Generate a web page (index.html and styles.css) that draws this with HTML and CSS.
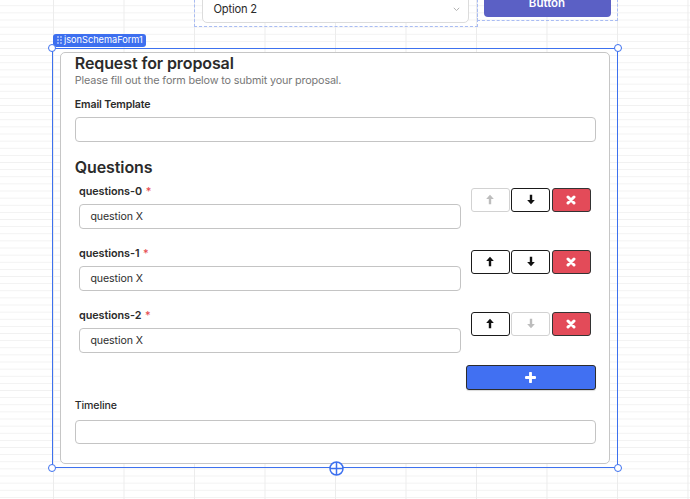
FILE: index.html
```html
<!DOCTYPE html>
<html>
<head>
<meta charset="utf-8">
<link rel="stylesheet" href="styles.css">
</head>
<body>
<div class="canvas">
  <div class="widget widget-select">
    <div class="select">
      <span class="select-text">Option 2</span>
      <svg class="chev" width="7" height="5" viewBox="0 0 7 5"><path d="M0.8 0.8 L3.5 3.6 L6.2 0.8" fill="none" stroke="#b3b3b3" stroke-width="1"/></svg>
    </div>
  </div>
  <div class="widget widget-button">
    <div class="btn-primary">Button</div>
  </div>

  <div class="tag">
    <svg class="grip" width="5" height="8" viewBox="0 0 5 8"><g fill="#fff"><circle cx="1" cy="1" r="0.8"/><circle cx="4" cy="1" r="0.8"/><circle cx="1" cy="4" r="0.8"/><circle cx="4" cy="4" r="0.8"/><circle cx="1" cy="7" r="0.8"/><circle cx="4" cy="7" r="0.8"/></g></svg>
    <span>jsonSchemaForm1</span>
  </div>

  <div class="selected">
    <div class="card">
      <h2 class="title">Request for proposal</h2>
      <p class="subtitle">Please fill out the form below to submit your proposal.</p>
      <div class="field-label">Email Template</div>
      <div class="input"></div>

      <h2 class="section">Questions</h2>
      <div class="q-list">
        <div class="q-row">
          <div class="q-main">
            <div class="q-label">questions-0 <span class="req">*</span></div>
            <div class="input q-input">question X</div>
          </div>
          <div class="q-actions">
            <div class="act disabled"><svg width="8" height="11" viewBox="0 0 10 12"><path d="M5 0 L9.8 5.4 L6.5 5.4 L6.5 12 L3.5 12 L3.5 5.4 L0.2 5.4 Z"/></svg></div>
            <div class="act"><svg width="8" height="11" viewBox="0 0 10 12"><path d="M5 12 L9.8 6.6 L6.5 6.6 L6.5 0 L3.5 0 L3.5 6.6 L0.2 6.6 Z"/></svg></div>
            <div class="act danger"><svg width="10" height="10" viewBox="0 0 10 10"><path d="M2 2 L8 8 M8 2 L2 8" stroke="#fff" stroke-width="3" stroke-linecap="round"/></svg></div>
          </div>
        </div>
        <div class="q-row">
          <div class="q-main">
            <div class="q-label">questions-1 <span class="req">*</span></div>
            <div class="input q-input">question X</div>
          </div>
          <div class="q-actions">
            <div class="act"><svg width="8" height="11" viewBox="0 0 10 12"><path d="M5 0 L9.8 5.4 L6.5 5.4 L6.5 12 L3.5 12 L3.5 5.4 L0.2 5.4 Z"/></svg></div>
            <div class="act"><svg width="8" height="11" viewBox="0 0 10 12"><path d="M5 12 L9.8 6.6 L6.5 6.6 L6.5 0 L3.5 0 L3.5 6.6 L0.2 6.6 Z"/></svg></div>
            <div class="act danger"><svg width="10" height="10" viewBox="0 0 10 10"><path d="M2 2 L8 8 M8 2 L2 8" stroke="#fff" stroke-width="3" stroke-linecap="round"/></svg></div>
          </div>
        </div>
        <div class="q-row">
          <div class="q-main">
            <div class="q-label">questions-2 <span class="req">*</span></div>
            <div class="input q-input">question X</div>
          </div>
          <div class="q-actions">
            <div class="act"><svg width="8" height="11" viewBox="0 0 10 12"><path d="M5 0 L9.8 5.4 L6.5 5.4 L6.5 12 L3.5 12 L3.5 5.4 L0.2 5.4 Z"/></svg></div>
            <div class="act disabled"><svg width="8" height="11" viewBox="0 0 10 12"><path d="M5 12 L9.8 6.6 L6.5 6.6 L6.5 0 L3.5 0 L3.5 6.6 L0.2 6.6 Z"/></svg></div>
            <div class="act danger"><svg width="10" height="10" viewBox="0 0 10 10"><path d="M2 2 L8 8 M8 2 L2 8" stroke="#fff" stroke-width="3" stroke-linecap="round"/></svg></div>
          </div>
        </div>
      </div>

      <div class="add-wrap">
        <div class="add"><svg width="11" height="11" viewBox="0 0 10 10"><path d="M5 1 V9 M1 5 H9" stroke="#fff" stroke-width="2.6" stroke-linecap="round"/></svg></div>
      </div>

      <div class="field-label light">Timeline</div>
      <div class="input input-last"></div>
    </div>

    <span class="handle h-tl"></span>
    <span class="handle h-tr"></span>
    <span class="handle h-bl"></span>
    <span class="handle h-br"></span>
    <svg class="plus-handle" width="15" height="15" viewBox="0 0 15 15"><circle cx="7.5" cy="7.5" r="6.5" fill="#fff" stroke="#3d71ef" stroke-width="1.5"/><path d="M7.5 1 V14 M1 7.5 H14" stroke="#3d71ef" stroke-width="1.5"/></svg>
  </div>
</div>
</body>
</html>
```

FILE: styles.css
```css
* { box-sizing: border-box; }

html, body {
  margin: 0;
  padding: 0;
}

body {
  width: 690px;
  height: 499px;
  overflow: hidden;
  font-family: "Inter", "Noto Sans", "Liberation Sans", sans-serif;
  color: #2b2b2b;
  background-color: #fff;
  background-image:
    linear-gradient(to right, #ececec 1px, transparent 1px),
    linear-gradient(to bottom, #f1f1f1 1px, transparent 1px);
  background-size: 70.5px 100%, 100% 7.13px;
  background-position: 53px 0, 0 5.3px;
}

.canvas {
  position: relative;
  width: 690px;
  height: 499px;
}

/* top widgets on the canvas */
.widget {
  position: absolute;
  border: 1px dashed #a9bcf3;
  display: flex;
  align-items: flex-end;
}

.widget-select {
  left: 194px;
  top: -20px;
  width: 284px;
  height: 47px;
  padding: 0 0 2.7px 6.5px;
}

.select {
  width: 267.5px;
  height: 31px;
  background: #fff;
  border: 1px solid #dcdcdc;
  border-radius: 5px;
  display: flex;
  align-items: center;
  justify-content: space-between;
  padding: 3px 8px 0 11px;
  font-size: 11.2px;
  letter-spacing: -0.2px;
  color: #2a2a2a;
}

.chev { margin-top: 0; }

.widget-button {
  left: 477px;
  top: -20px;
  width: 141px;
  height: 41px;
  padding: 0 0 3.5px 5.5px;
}

.btn-primary {
  width: 127px;
  height: 30px;
  background: #5b60c5;
  border-radius: 4px;
  color: #fff;
  font-size: 11.5px;
  font-weight: 600;
  display: flex;
  align-items: center;
  justify-content: center;
  padding-top: 3px;
}

/* selection tag */
.tag {
  position: absolute;
  left: 53px;
  top: 34px;
  height: 12.5px;
  padding: 0 3px 0 4px;
  background: #3d6fef;
  border-radius: 3px;
  color: #fff;
  font-size: 9.2px;
  line-height: 12.5px;
  display: flex;
  align-items: center;
  gap: 2px;
}

.selected {
  position: absolute;
  left: 52px;
  top: 47.5px;
  width: 566px;
  height: 420.5px;
  border: 1.5px solid #3d71ef;
  padding: 3px 0 0 6.5px;
}

.card {
  width: 550px;
  height: 412px;
  background: #fff;
  border: 1.5px solid #c6c6c6;
  border-radius: 5px;
  padding: 0 13.5px 0 14.3px;
}

.title {
  margin: 0;
  font-size: 16px;
  line-height: 20px;
  font-weight: 600;
  letter-spacing: -0.1px;
  color: #2b2b2b;
}

.subtitle {
  margin: 1.5px 0 0;
  font-size: 10.8px;
  line-height: 14px;
  letter-spacing: -0.15px;
  color: #777;
}

.field-label {
  margin-top: 9.5px;
  font-size: 10.6px;
  line-height: 14px;
  font-weight: 600;
  letter-spacing: -0.15px;
  color: #2b2b2b;
}

.field-label.light {
  margin-top: 9.5px;
  font-weight: 500;
}

.input {
  margin-top: 5.5px;
  margin-right: -0.8px;
  height: 24.5px;
  border: 1px solid #c4c4c4;
  border-radius: 4px;
  background: #fff;
}

.input-last { margin-top: 6.5px; }

.section {
  margin: 15px 0 0;
  font-size: 16px;
  line-height: 20px;
  font-weight: 600;
  letter-spacing: -0.1px;
  color: #2b2b2b;
}

.q-list {
  margin-top: 8.3px;
  display: flex;
  flex-direction: column;
  gap: 17.8px;
}

.q-row {
  display: flex;
  align-items: flex-start;
  padding: 0 4.5px 0 4.2px;
}

.q-main {
  flex: 1;
}

.q-label {
  font-size: 10.8px;
  line-height: 14px;
  font-weight: 600;
  letter-spacing: -0.05px;
  color: #2b2b2b;
}

.req {
  color: #e5484d;
  font-weight: 500;
  margin-left: 1px;
}

.q-input {
  margin-top: 5.7px;
  margin-right: 0;
  display: flex;
  align-items: center;
  padding-left: 10.5px;
  font-size: 10.6px;
  letter-spacing: -0.1px;
  color: #2e2e2e;
}

.q-actions {
  margin-left: 9.5px;
  margin-top: 2.8px;
  display: flex;
  gap: 1.5px;
}

.act {
  width: 39px;
  height: 24px;
  border: 1.5px solid #1a1a1a;
  border-radius: 3px;
  background: #fff;
  display: flex;
  align-items: center;
  justify-content: center;
  fill: #111;
}

.act.disabled {
  border: 1px solid #d2d2d2;
  fill: #bdbdbd;
}

.act.danger {
  background: #e34b59;
  border-color: #333;
}

.add-wrap {
  display: flex;
  justify-content: flex-end;
  margin-top: 12.5px;
  margin-right: -0.8px;
}

.add {
  width: 130px;
  height: 24.5px;
  background: #4170f2;
  border: 1.5px solid #2c2c2c;
  border-radius: 3px;
  display: flex;
  align-items: center;
  justify-content: center;
  box-shadow: 0 1px 1px rgba(0,0,0,0.15);
}

/* selection handles */
.handle {
  position: absolute;
  width: 8px;
  height: 8px;
  border: 1.5px solid #3d71ef;
  border-radius: 50%;
  background: #fff;
}

.h-tl { left: -5px; top: -5px; }
.h-tr { right: -5px; top: -5px; }
.h-bl { left: -5px; bottom: -5px; }
.h-br { right: -5px; bottom: -5px; }

.plus-handle {
  position: absolute;
  left: 275.5px;
  bottom: -8.5px;
}
```
